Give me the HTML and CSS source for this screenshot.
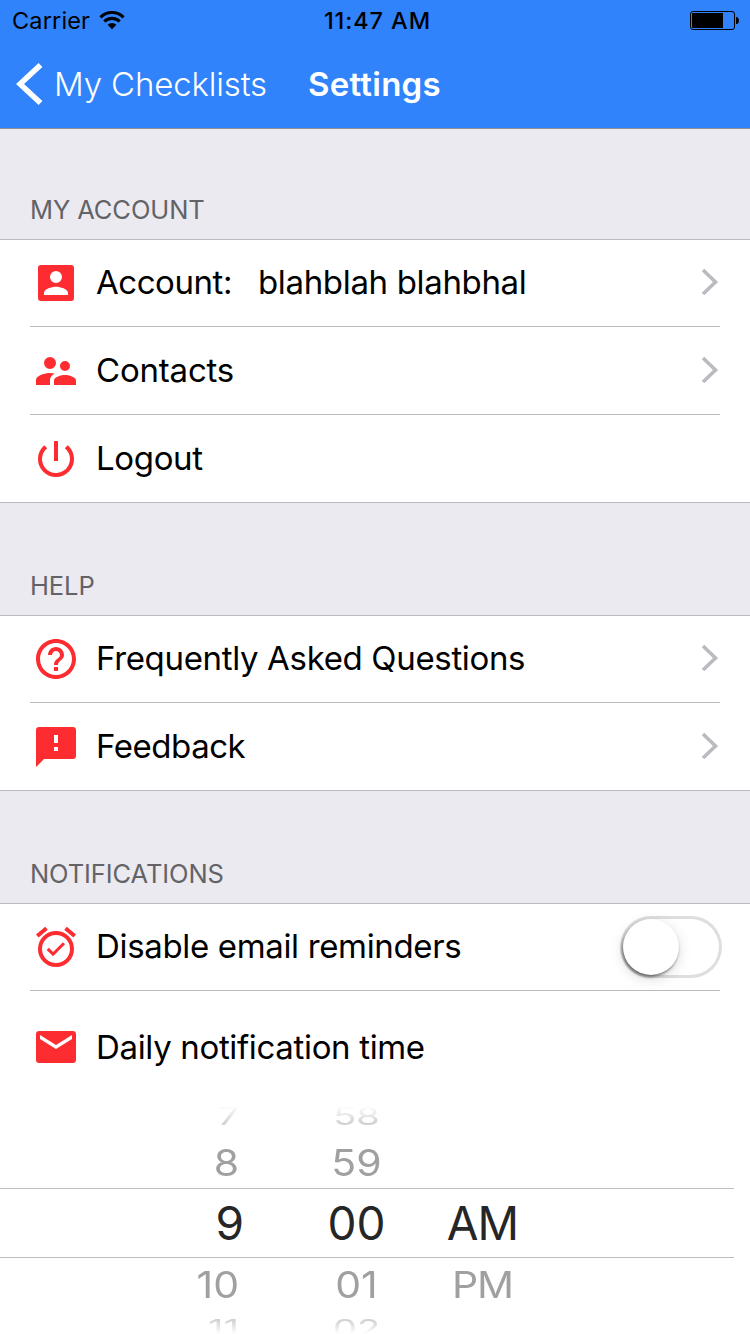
FILE: index.html
```html
<!DOCTYPE html>
<html lang="en">
<head>
<meta charset="utf-8">
<title>Settings</title>
<link rel="stylesheet" href="styles.css">
</head>
<body>
<div class="screen">
  <header class="header">
    <div class="status">
      <div class="carrier"><span class="carrier-name">Carrier</span>
        <svg class="wifi" width="26" height="19" viewBox="0 0 26 19"><g fill="none" stroke="#000" stroke-width="3.1"><path d="M1.500 6.300a16.200 16.200 0 0 1 23 0"/><path d="M5.300 10.500a11 11 0 0 1 15.400 0"/></g><path d="M13 18.200 8.600 13.700a6.300 6.300 0 0 1 8.800 0z"/></svg>
      </div>
      <div class="clock">11:47 AM</div>
      <svg class="battery" width="50" height="20" viewBox="0 0 50 20"><rect x=".5" y=".5" width="44" height="18" rx="2.500" fill="none" stroke="#000"/><path d="M3 2h30v15H3a1 1 0 0 1-1-1V3a1 1 0 0 1 1-1zM46 6h1q2 1 2 3.500T47 13h-1z"/></svg>
    </div>
    <nav class="nav">
      <svg class="back" width="28" height="44" viewBox="0 0 28 44"><path d="M24.500 3 4 22l20.500 19" fill="none" stroke="#fff" stroke-width="5.600"/></svg>
      <span class="back-label">My Checklists</span>
      <h1 class="title">Settings</h1>
    </nav>
  </header>

  <h2 class="heading first">MY ACCOUNT</h2>
  <div class="list">
    <div class="row">
      <svg class="icon" viewBox="0 0 24 24"><path fill-rule="evenodd" d="M4.500 3h15A1.500 1.500 0 0 1 21 4.500v15a1.500 1.500 0 0 1-1.500 1.500h-15A1.500 1.500 0 0 1 3 19.500v-15A1.500 1.500 0 0 1 4.500 3zM15 9a3 3 0 1 0-6 0 3 3 0 0 0 6 0zm-9 8v1h12v-1c0-2-4-3.100-6-3.100S6 15 6 17z"/></svg>
      <span class="label snug">Account:</span><span class="label name">blahblah blahbhal</span>
      <svg class="chevron" viewBox="0 0 18 28"><path d="m2 2 12.500 12L2 26"/></svg>
    </div>
    <div class="row">
      <svg class="icon" viewBox="0 0 24 24"><path d="M16.500 12a2.500 2.500 0 1 0 0-5 2.500 2.500 0 0 0 0 5zM9 11a3 3 0 1 0 0-6 3 3 0 0 0 0 6zm7.500 3c-1.830 0-5.500.92-5.500 2.750V19h11v-2.250c0-1.830-3.670-2.750-5.500-2.750zM9 13c-2.330 0-7 1.170-7 3.500V19h7v-2.250c0-.85.33-2.340 2.370-3.470C10.500 13.100 9.660 13 9 13z"/></svg>
      <span class="label loose">Contacts</span>
      <svg class="chevron" viewBox="0 0 18 28"><path d="m2 2 12.500 12L2 26"/></svg>
    </div>
    <div class="row">
      <svg class="icon" viewBox="0 0 24 24"><path d="M13 3h-2v10h2V3zm4.830 2.170-1.420 1.420A6.920 6.920 0 0 1 19 12a7 7 0 1 1-11.420-5.420L6.170 5.170A8.932 8.932 0 0 0 3 12a9 9 0 1 0 18 0c0-2.740-1.230-5.180-3.170-6.830z"/></svg>
      <span class="label">Logout</span>
    </div>
  </div>

  <h2 class="heading">HELP</h2>
  <div class="list">
    <div class="row">
      <svg class="icon" viewBox="0 0 24 24"><path d="M11 18h2v-2h-2v2zm1-16C6.480 2 2 6.480 2 12s4.480 10 10 10 10-4.480 10-10S17.520 2 12 2zm0 18c-4.410 0-8-3.590-8-8s3.590-8 8-8 8 3.590 8 8-3.590 8-8 8zm0-14c-2.210 0-4 1.790-4 4h2c0-1.100.9-2 2-2s2 .9 2 2c0 2-3 1.750-3 5h2c0-2.250 3-2.500 3-5 0-2.210-1.790-4-4-4z"/></svg>
      <span class="label">Frequently Asked Questions</span>
      <svg class="chevron" viewBox="0 0 18 28"><path d="m2 2 12.500 12L2 26"/></svg>
    </div>
    <div class="row">
      <svg class="icon" viewBox="0 0 24 24"><path d="M20.500 2h-17C2.600 2 2 2.600 2 3.500V22l4-4h14.500c.9 0 1.500-.6 1.500-1.500v-13c0-.9-.6-1.500-1.500-1.500zM13 14h-2v-2h2v2zm0-4h-2V6h2v4z"/></svg>
      <span class="label snug">Feedback</span>
      <svg class="chevron" viewBox="0 0 18 28"><path d="m2 2 12.500 12L2 26"/></svg>
    </div>
  </div>

  <h2 class="heading">NOTIFICATIONS</h2>
  <div class="list open">
    <div class="row">
      <svg class="icon" viewBox="0 0 24 24"><path d="m22 5.720-4.600-3.860-1.290 1.530 4.600 3.860L22 5.720zM7.880 3.390 6.600 1.860 2 5.710l1.290 1.530 4.590-3.850zM12 4a9 9 0 1 0 0 18 9 9 0 0 0 0-18zm0 16a7 7 0 1 1 0-14 7 7 0 0 1 0 14zm-1.460-5.470L8.410 12.400l-1.060 1.060 3.180 3.180 6-6-1.060-1.060-4.930 4.950z"/></svg>
      <span class="label">Disable email reminders</span>
      <span class="switch"><span class="knob"></span></span>
    </div>
    <div class="row tall">
      <svg class="icon" viewBox="0 0 24 24"><path d="M20.400 4H3.600C2.600 4 2 4.600 2 5.500v13c0 .9.600 1.500 1.600 1.500h16.800c1 0 1.600-.6 1.600-1.500v-13c0-.9-.6-1.500-1.600-1.500zM20 8l-8 5-8-5V6l8 5 8-5v2z"/></svg>
      <span class="label">Daily notification time</span>
    </div>
    <div class="picker">
      <div class="wheel far"><span class="hour">7</span><span class="minute">58</span></div>
      <div class="wheel near"><span class="hour">8</span><span class="minute">59</span></div>
      <div class="wheel current"><span class="hour">9</span><span class="minute">00</span><span class="period">AM</span></div>
      <div class="wheel near below"><span class="hour">10</span><span class="minute">01</span><span class="period">PM</span></div>
      <div class="wheel far below"><span class="hour">11</span><span class="minute">02</span></div>
    </div>
  </div>
</div>
</body>
</html>
```
FILE: styles.css
```css
* { box-sizing: border-box; }
body {
  margin: 0;
  font-family: Inter, "Liberation Sans", sans-serif;
  color: #000;
}
.screen {
  width: 750px;
  height: 1334px;
  overflow: hidden;
  background: #ebeaf0;
  white-space: nowrap;
}
h1, h2 { margin: 0; }

.header {
  height: 129px;
  background: #3083fb;
  border-bottom: 1px solid #8f9298;
}
.status {
  display: grid;
  grid-template-columns: 1fr auto 1fr;
  align-items: center;
  height: 40px;
  padding: 1px 10px 0 12px;
  font-size: 23.5px;
}
.carrier { display: flex; align-items: center; gap: 9px; }
.carrier-name { letter-spacing: .15px; }
.clock { font-weight: 500; letter-spacing: .9px; padding-left: 3px; }
.battery { justify-self: end; }
.nav {
  display: flex;
  align-items: center;
  height: 88px;
  padding-left: 16px;
  color: #fff;
}
.back-label {
  width: 254px;
  margin-left: 10px;
  font-size: 33px;
  font-weight: 300;
  letter-spacing: -.15px;
}
.title { font-size: 33px; font-weight: 600; letter-spacing: .25px; }

.heading {
  display: flex;
  align-items: flex-end;
  height: 112px;
  padding: 0 30px 13px;
  font-size: 25.5px;
  line-height: 32px;
  font-weight: 400;
  letter-spacing: -.1px;
  color: #636367;
}
.heading.first { height: 110px; }

.list {
  background: #fff;
  box-shadow: inset 0 1px #bcbac1, inset 0 -1px #bcbac1;
}
.list.open { box-shadow: inset 0 1px #bcbac1; }
.row {
  display: flex;
  align-items: center;
  height: 88px;
  padding: 0 31px 0 32px;
  background: linear-gradient(#bcbac1, #bcbac1) 30px 100% / 690px 1px no-repeat;
}
.row:last-child, .row.tall { background: none; }
.row.tall { height: 112px; }
.icon { width: 48px; height: 48px; fill: #fc2c30; margin-right: 16px; }
.label { font-size: 33px; letter-spacing: -.34px; padding-bottom: 2px; }
.label.snug { letter-spacing: -.45px; }
.label.loose { letter-spacing: -.2px; }
.label.name { margin-left: 26px; }
.tall .label { padding-bottom: 0; }
.chevron {
  width: 18px;
  height: 30px;
  padding-bottom: 2px;
  margin-left: auto;
  fill: none;
  stroke: #bcbac1;
  stroke-width: 3.6;
}

.switch {
  width: 102px;
  height: 62px;
  margin: 0 -3px 0 auto;
  padding: 3px;
  border-radius: 31px;
  box-shadow: inset 0 0 0 3px #dedede;
}
.knob {
  display: block;
  width: 56px;
  height: 56px;
  border-radius: 50%;
  background: #fff;
  box-shadow: -1px 2px 3px rgba(0,0,0,.5), 0 4px 14px rgba(0,0,0,.14);
}

.picker {
  display: grid;
  grid-template-rows: 33px 52px 70px 49px 27px;
  height: 231px;
}
.wheel {
  display: grid;
  grid-template-columns: 244px 225px 27px;
  align-items: center;
  font-size: 46px;
  line-height: 54px;
  color: #262626;
}
.hour { justify-self: end; }
.minute, .period { justify-self: center; }
.period { letter-spacing: -1px; }
.current {
  width: 734px;
  border-top: 1px solid #bebebe;
  border-bottom: 1px solid #bebebe;
}
.near { color: #a0a0a0; font-size: 41px; }
.near span { transform: scaleY(.9); }
.near .hour, .far .hour { margin-right: 5px; }
.far {
  align-items: start;
  color: #d2d2d2;
  font-size: 38px;
  line-height: 27px;
  -webkit-mask-image: linear-gradient(transparent 10%, #000 60%);
  mask-image: linear-gradient(transparent 10%, #000 60%);
}
.far span { transform: scaleY(.62); }
.far.below {
  padding-top: 8px;
  -webkit-mask-image: linear-gradient(#000 50%, transparent 100%);
  mask-image: linear-gradient(#000 50%, transparent 100%);
}
```
